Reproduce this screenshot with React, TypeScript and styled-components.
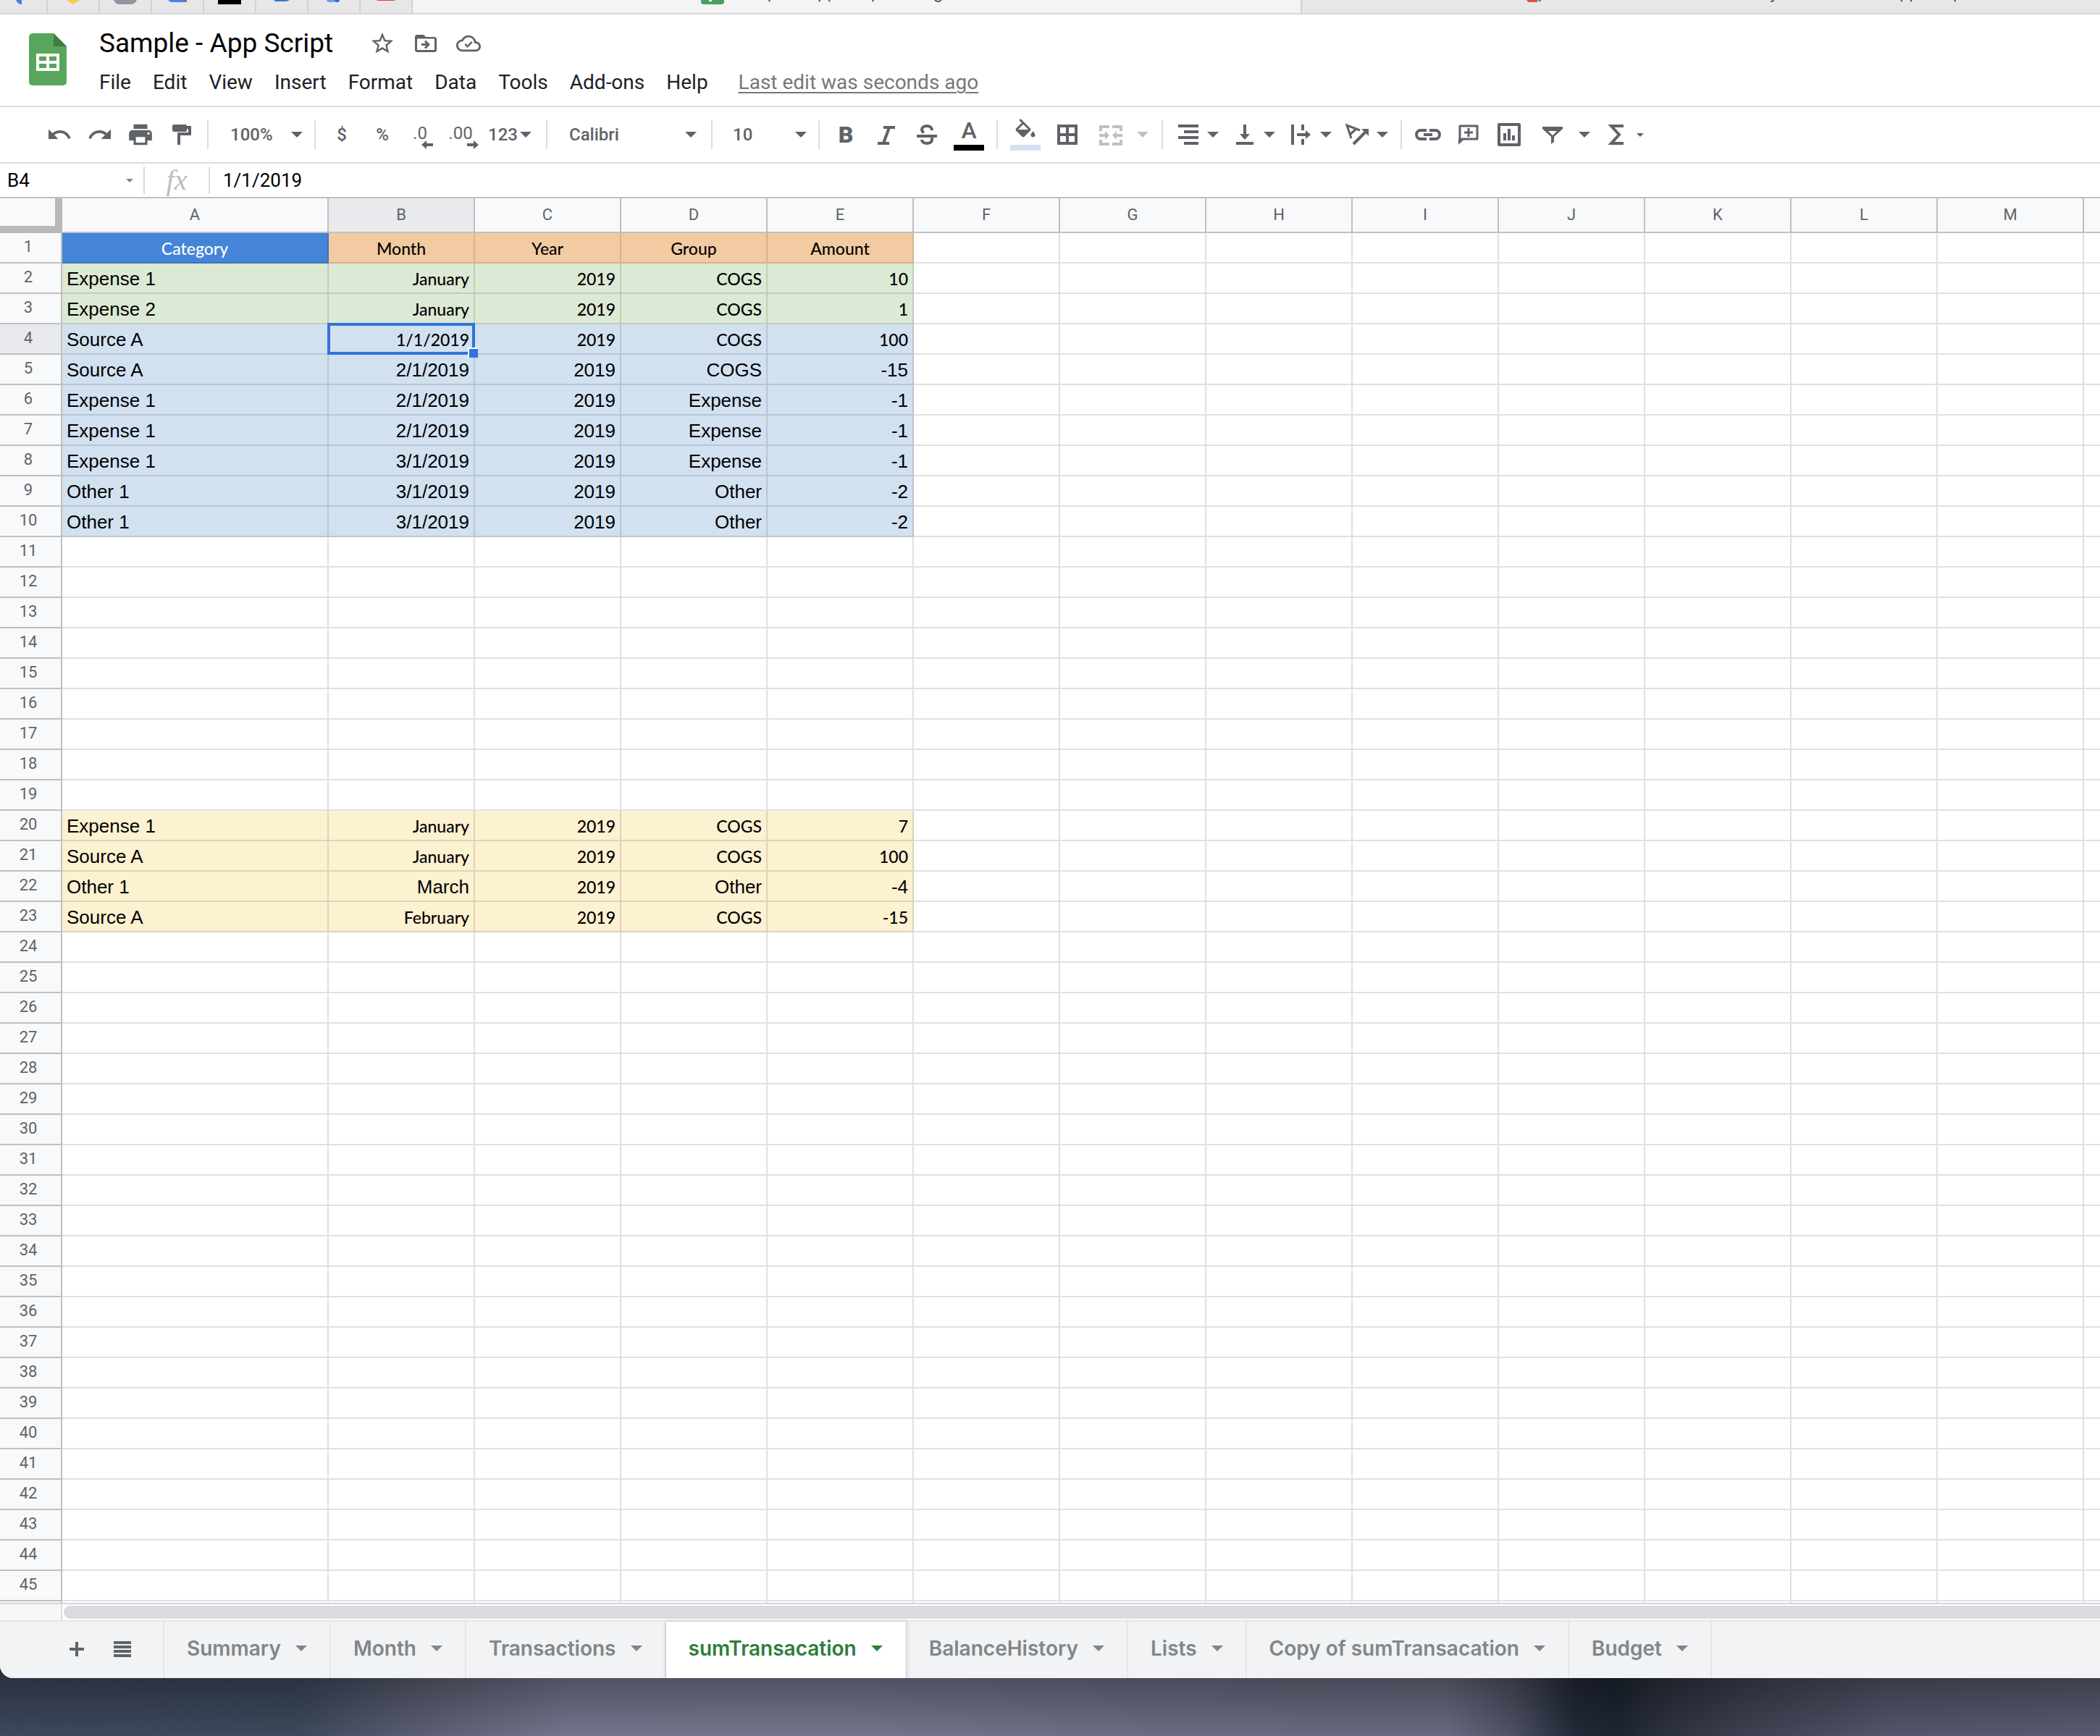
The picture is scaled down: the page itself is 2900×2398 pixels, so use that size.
import React from "react";
import styled, { createGlobalStyle } from "styled-components";

const INK = "#5f6368";
const LINE = "#dadce0";
const HEAD_LINE = "#c0c0c0";

const GlobalStyle = createGlobalStyle`
  *, *::before, *::after { box-sizing: border-box; }
  body {
    margin: 0;
    font-family: Roboto, "Liberation Sans", sans-serif;
    color: #202124;
  }
  button, input, select {
    font: inherit;
    color: inherit;
    border: 0;
    margin: 0;
    padding: 0;
    background: none;
    outline: 0;
  }
  button { cursor: pointer; }
`;

const Desktop = styled.div`
  display: flex;
  flex-direction: column;
  min-height: 100vh;
  padding-bottom: 80px;
  overflow: hidden;
  background:
    linear-gradient(to bottom, rgba(0, 0, 0, 0.38), rgba(0, 0, 0, 0)) bottom / 100% 100px no-repeat,
    linear-gradient(
      to right,
      #3e475c 0%,
      #3c485b 14%,
      #5b5e72 20%,
      #73758c 27%,
      #74768c 40%,
      #6a6c82 56%,
      #676a7f 69%,
      #4d5163 72%,
      #222938 75%,
      #1d2532 77%,
      #2b303d 79%,
      #3d4050 83%,
      #53556a 90%,
      #595b70 100%
    );
`;

const Window = styled.main`
  display: flex;
  flex-direction: column;
  background: #fff;
  border-bottom-left-radius: 18px;
  overflow: hidden;
`;

/* ---------- Browser tabs ---------- */

const BrowserTabs = styled.nav`
  display: flex;
  align-items: flex-end;
  height: 20px;
  overflow: hidden;
  border-bottom: 2px solid #d6d6d6;
`;

const PinnedTab = styled.button<{ $first?: boolean }>`
  display: flex;
  flex: none;
  align-items: center;
  justify-content: center;
  width: ${(p) => (p.$first ? 66 : 72)}px;
  height: 58px;
  padding-top: 2px;
  background: #e7e7e7;
  border-right: 2px solid #d2d2d2;
`;

const BrowserTab = styled.button<{ $active?: boolean }>`
  display: flex;
  flex: none;
  align-items: center;
  justify-content: center;
  gap: 14px;
  width: calc((100% - 444px) / 2);
  height: 58px;
  padding-top: 2px;
  white-space: nowrap;
  font: 22px Inter, sans-serif;
  color: #4a4a4a;
  background: ${(p) => (p.$active ? "#f4f4f4" : "#e7e7e7")};
  border-right: 2px solid #d2d2d2;
`;

/* ---------- Header ---------- */

const Header = styled.header`
  display: flex;
  gap: 45px;
  height: 126px;
  padding: 16px 40px 0;
`;

const LogoLink = styled.a`
  display: block;
  padding-top: 10px;
`;

const HeaderBody = styled.div`
  display: flex;
  flex-direction: column;
  gap: 10px;
`;

const TitleRow = styled.div`
  display: flex;
  align-items: center;
  gap: 24px;
`;

const TitleInput = styled.input`
  width: 349px;
  height: 48px;
  font-size: 37px;
  line-height: 48px;
  color: #000;
`;

const PlainButton = styled.button`
  display: flex;
  color: ${INK};
`;

const MenuRow = styled.div`
  display: flex;
  gap: 30px;
  font-size: 28px;
  line-height: 40px;
`;

const MenuButton = styled.button`
  white-space: nowrap;
`;

const EditLink = styled.a`
  margin-left: 12px;
  color: #777;
  white-space: nowrap;
  text-underline-offset: 4px;
  text-decoration-thickness: 2px;
`;

/* ---------- Toolbar ---------- */

const Toolbar = styled.div`
  display: flex;
  align-items: center;
  height: 80px;
  padding-left: 54px;
  border-top: 2px solid ${LINE};
  border-bottom: 2px solid ${LINE};
  font-size: 24px;
  font-weight: 500;
  color: ${INK};
`;

const Divider = styled.div`
  flex: none;
  width: 2px;
  height: 40px;
  margin: 0 8px;
  background: ${LINE};
`;

const ToolButton = styled.button<{ $width?: number; $faded?: boolean }>`
  display: flex;
  flex: none;
  align-items: center;
  justify-content: center;
  width: ${(p) => p.$width ?? 56}px;
  height: 52px;
  opacity: ${(p) => (p.$faded ? 0.4 : 1)};
`;

const SplitButton = styled(ToolButton)<{ $gap: number; $start: number }>`
  justify-content: flex-start;
  gap: ${(p) => p.$gap}px;
  padding-left: ${(p) => p.$start}px;
`;

const Decimal = styled.span`
  display: grid;
  padding: 8px 8px 0 0;
  font-size: 24px;
  font-weight: 400;
  line-height: 20px;

  svg {
    justify-self: end;
    margin-right: -8px;
  }
`;

const Swatch = styled.span<{ $color: string }>`
  display: grid;
  justify-items: center;
  width: 42px;
  height: 44px;
  font-size: 32px;
  line-height: 32px;
  border-bottom: 8px solid ${(p) => p.$color};
`;

const BoldMark = styled.span`
  font-size: 32px;
  font-weight: 900;
`;

const SelectBox = styled.label<{ $width: number; $start: number; $end: number }>`
  display: grid;
  flex: none;
  align-items: center;
  width: ${(p) => p.$width}px;
  padding: 0 ${(p) => p.$end}px 0 ${(p) => p.$start}px;

  select, svg { grid-area: 1 / 1; }
  select { width: 100%; height: 40px; appearance: none; }
  svg { justify-self: end; pointer-events: none; }
`;

/* ---------- Formula bar ---------- */

const FormulaBar = styled.div`
  display: flex;
  align-items: center;
  height: 48px;
  border-bottom: 2px solid ${HEAD_LINE};
  font-size: 26px;
  color: #000;
`;

const NameBox = styled.label`
  display: flex;
  align-items: center;
  width: 200px;
  height: 38px;
  padding: 0 14px 0 10px;
  color: #80868b;
  border-right: 2px solid ${LINE};

  input { flex: 1; min-width: 0; color: #000; }
`;

const FormulaField = styled.label`
  display: flex;
  flex: 1;
  align-items: center;

  input {
    flex: 1;
    height: 36px;
    padding-left: 18px;
    border-left: 2px solid ${LINE};
  }
`;

const FxMark = styled.span`
  width: 88px;
  text-align: center;
  font: italic 40px/40px "Liberation Serif", serif;
  color: #bdbdbd;
`;

/* ---------- Grid ---------- */

const Sheet = styled.table`
  width: 100%;
  table-layout: fixed;
  border-spacing: 0;
  border-bottom: 2px solid #d5d5d5;

  tr > :last-child { border-right: 0; }
`;

const Corner = styled.td`
  height: 48px;
  padding: 0;
  background: #f8f9fa;
  border-right: 10px solid #b9b9b9;
  border-bottom: 10px solid #b9b9b9;
`;

const ColumnHead = styled.th<{ $selected?: boolean }>`
  height: 48px;
  padding: 0 0 2px;
  font-size: 22px;
  font-weight: 400;
  color: ${INK};
  background: ${(p) => (p.$selected ? "#e8eaed" : "#f8f9fa")};
  border-right: 2px solid ${HEAD_LINE};
  border-bottom: 2px solid ${HEAD_LINE};
`;

const RowHead = styled.th<{ $selected?: boolean }>`
  height: 42px;
  padding: 0 6px 2px 0;
  font-size: 22px;
  font-weight: 400;
  line-height: 36px;
  color: ${INK};
  background: ${(p) => (p.$selected ? "#e8eaed" : "#f8f9fa")};
  border-right: 2px solid ${HEAD_LINE};
  border-bottom: 2px solid ${HEAD_LINE};
`;

type Face = "arial" | "calibri";

const Cell = styled.td<{ $fill?: string; $align?: string; $face?: Face; $light?: boolean }>`
  position: relative;
  height: 42px;
  padding: 2px 6px 0;
  font-family: ${(p) => (p.$face === "calibri" ? 'Lato, "Liberation Sans"' : '"Liberation Sans", Arial')}, sans-serif;
  font-size: ${(p) => (p.$face === "calibri" ? 23 : 26)}px;
  font-weight: ${(p) => (p.$face === "calibri" ? 500 : 400)};
  line-height: 38px;
  text-align: ${(p) => p.$align ?? "left"};
  white-space: nowrap;
  color: ${(p) => (p.$light ? "#fff" : "#000")};
  background: ${(p) => p.$fill ?? "#fff"};
  border-right: 2px solid rgba(0, 0, 0, 0.12);
  border-bottom: 2px solid rgba(0, 0, 0, 0.12);
`;

const Sliver = styled.td<{ $head?: boolean }>`
  height: 2px;
  padding: 0;
  background: ${(p) => (p.$head ? "#f8f9fa" : "#fff")};
  border-right: 2px solid ${(p) => (p.$head ? HEAD_LINE : "#e0e0e0")};
`;

const Selection = styled.span`
  position: absolute;
  z-index: 1;
  inset: -2px;
  border: 4px solid #3272dd;

  &::after {
    content: "";
    position: absolute;
    right: -8px;
    bottom: -8px;
    width: 14px;
    height: 14px;
    background: #3272dd;
    border-top: 2px solid #fff;
    border-left: 2px solid #fff;
  }
`;

const ScrollRow = styled.div`
  display: flex;
  height: 22px;
`;

const ScrollStub = styled.div`
  flex: none;
  width: 86px;
  background: #f8f8f8;
  border-right: 2px solid ${LINE};
`;

const ScrollThumb = styled.div`
  flex: 1;
  margin: 2px 0 2px 2px;
  background: #dadbdf;
  border-radius: 9px 0 0 9px;
`;

/* ---------- Sheet tabs ---------- */

const SheetBar = styled.nav`
  display: flex;
  height: 80px;
  background: #f1f3f4;
  border-top: 2px solid #e4e6e8;
`;

const SheetActions = styled.div`
  display: flex;
  align-items: center;
  gap: 38px;
  width: 227px;
  padding: 0 0 2px 94px;
  border-right: 2px solid #e4e6e8;
`;

const SheetTab = styled.button<{ $active?: boolean }>`
  display: flex;
  align-items: center;
  gap: 20px;
  padding: 0 31px 4px;
  font-family: Inter, Roboto, sans-serif;
  font-size: 28px;
  font-weight: 600;
  white-space: nowrap;
  color: ${(p) => (p.$active ? "#2e7d3a" : "#80868b")};
  background: ${(p) => (p.$active ? "#fff" : "transparent")};
  border-right: 2px solid #e4e6e8;
  box-shadow: ${(p) => (p.$active ? "0 0 6px rgba(60, 64, 67, 0.25)" : "none")};
`;

/* ---------- Icons ---------- */

type IconProps = { size?: number; children: React.ReactNode };

const Glyph = ({ size = 36, children }: IconProps) => (
  <svg width={size} height={size} viewBox="0 0 24 24" fill="currentColor" aria-hidden="true">
    {children}
  </svg>
);

const Line = ({ size = 36, children }: IconProps) => (
  <svg width={size} height={size} viewBox="0 0 36 36" fill="none" stroke="currentColor" strokeWidth="4" aria-hidden="true">
    {children}
  </svg>
);

const Caret = ({ small }: { small?: boolean }) => (
  <svg width={small ? 10 : 16} height={small ? 5 : 8} viewBox="0 0 16 8" fill="currentColor" aria-hidden="true">
    <path d="M0 0h16L8 8z" />
  </svg>
);

const Logo = () => (
  <svg width="52" height="72" viewBox="0 0 52 72" aria-hidden="true">
    <path d="M5 0h29l18 18v49a5 5 0 0 1-5 5H5a5 5 0 0 1-5-5V5a5 5 0 0 1 5-5z" fill="#57a65b" />
    <path d="M34 0l18 18H34z" fill="#3c7f41" />
    <path d="M10 28h32v24H10zM14 32v6h10v-6zM28 32v6h10v-6zM14 42v6h10v-6zM28 42v6h10v-6z" fill="#fff" fillRule="evenodd" />
  </svg>
);

const StarIcon = () => (
  <Glyph>
    <path d="M22 9.24l-7.19-.62L12 2 9.19 8.63 2 9.24l5.46 4.73L5.82 21 12 17.27 18.18 21l-1.63-7.03L22 9.24zM12 15.4l-3.76 2.27 1-4.28-3.32-2.88 4.38-.38L12 6.1l1.71 4.04 4.38.38-3.32 2.88 1 4.28L12 15.4z" />
  </Glyph>
);

const MoveIcon = () => (
  <Glyph>
    <path d="M20 6h-8l-2-2H4c-1.1 0-2 .9-2 2v12c0 1.1.9 2 2 2h16c1.1 0 2-.9 2-2V8c0-1.1-.9-2-2-2zm0 12H4V7.6h16V18z" />
    <path d="M12.16 12H8v2h4.16l-1.59 1.59L11.99 17 16 13.01 11.99 9l-1.41 1.41L12.16 12z" />
  </Glyph>
);

const CloudIcon = () => (
  <Glyph size={34}>
    <path d="M19.35 10.04C18.67 6.59 15.64 4 12 4 9.11 4 6.6 5.64 5.35 8.04 2.34 8.36 0 10.91 0 14c0 3.31 2.69 6 6 6h13c2.76 0 5-2.24 5-5 0-2.64-2.05-4.78-4.65-4.96zM19 18H6c-2.21 0-4-1.79-4-4 0-2.05 1.53-3.76 3.56-3.97l1.07-.11.5-.95C8.08 7.14 9.94 6 12 6c2.62 0 4.88 1.86 5.39 4.43l.3 1.5 1.53.11c1.56.1 2.78 1.41 2.78 2.96 0 1.65-1.35 3-3 3z" />
    <path d="M11 16.2l-3-3 1.3-1.2 1.7 1.7 3.8-3.8 1.2 1.3z" />
  </Glyph>
);

const UndoIcon = () => (
  <Glyph>
    <path d="M12.5 8c-2.65 0-5.05.99-6.9 2.6L2 7v9h9l-3.62-3.62c1.39-1.16 3.16-1.88 5.12-1.88 3.54 0 6.55 2.31 7.6 5.5l2.37-.78C21.08 11.03 17.15 8 12.5 8z" />
  </Glyph>
);

const RedoIcon = () => (
  <Glyph>
    <path d="M18.4 10.6C16.55 8.99 14.15 8 11.5 8c-4.65 0-8.58 3.03-9.96 7.22L3.9 16c1.05-3.19 4.05-5.5 7.6-5.5 1.95 0 3.73.72 5.12 1.88L13 16h9V7l-3.6 3.6z" />
  </Glyph>
);

const PrintIcon = () => (
  <Glyph size={38}>
    <path d="M19 8H5c-1.66 0-3 1.34-3 3v6h4v4h12v-4h4v-6c0-1.66-1.34-3-3-3zm-3 11H8v-5h8v5zm3-7c-.55 0-1-.45-1-1s.45-1 1-1 1 .45 1 1-.45 1-1 1zm-1-9H6v4h12V3z" />
  </Glyph>
);

const RollerIcon = () => (
  <Line>
    <rect x="8" y="6" width="16" height="6" fill="currentColor" strokeLinejoin="round" />
    <path d="M24 8h6v9H15v15" />
  </Line>
);

const ArrowMark = ({ right }: { right?: boolean }) => (
  <svg width="16" height="12" viewBox="0 0 16 12" fill="currentColor" aria-hidden="true">
    {right ? <path d="M16 6L9 0v4H0v4h9v4z" /> : <path d="M0 6l7-6v4h9v4H7v4z" />}
  </svg>
);

const ItalicIcon = () => (
  <Line>
    <path d="M14 8h16M6 30h16M22 8l-8 22" />
  </Line>
);

const StrikeIcon = () => (
  <Line>
    <path d="M4 20h28M25 12c0-4-3-6-7-6s-7 2-7 5c0 2 1 3 3 4M11 25c0 3 3 5 7 5s7-2 7-5c0-1 0-2-1-3" />
  </Line>
);

const FillIcon = () => (
  <Glyph>
    <path d="M16.56 8.94L7.62 0 6.21 1.41l2.38 2.38-5.15 5.15c-.59.59-.59 1.54 0 2.12l5.5 5.5c.29.29.68.44 1.06.44s.77-.15 1.06-.44l5.5-5.5c.59-.58.59-1.53 0-2.12zM5.21 10L10 5.21 14.79 10H5.21zM19 11.5s-2 2.17-2 3.5c0 1.1.9 2 2 2s2-.9 2-2c0-1.33-2-3.5-2-3.5z" />
  </Glyph>
);

const BordersIcon = () => (
  <Line>
    <path d="M6 6h24v24H6zM18 6v24M6 18h24" />
  </Line>
);

const MergeIcon = () => (
  <Line>
    <path d="M4 13V7h12M32 13V7H20M4 25v6h12M32 25v6H20M2 19h8M34 19h-8" />
    <path d="M10 13l6 6-6 6zM26 13l-6 6 6 6z" fill="currentColor" stroke="none" />
  </Line>
);

const AlignIcon = () => (
  <Line>
    <path d="M4 6h28M12 14h20M4 22h28M12 30h20" />
  </Line>
);

const BottomIcon = () => (
  <Line>
    <path d="M6 30h24M18 4v14" />
    <path d="M11 17h14l-7 8z" fill="currentColor" stroke="none" />
  </Line>
);

const WrapIcon = () => (
  <Line>
    <path d="M6 4v28M20 4v8M20 24v8M12 18h14" />
    <path d="M24 12l7 6-7 6z" fill="currentColor" stroke="none" />
  </Line>
);

const RotateIcon = () => (
  <Line>
    <path d="M21 12L3 5l6 18M8 17l8-7" strokeWidth="3" />
    <path d="M12 31l18-18" />
    <path d="M23 10h10v10z" fill="currentColor" stroke="none" />
  </Line>
);

const LinkIcon = () => (
  <Line>
    <path d="M16 12H8a6 6 0 0 0 0 12h8M20 12h8a6 6 0 0 1 0 12h-8M12 18h12" />
  </Line>
);

const CommentIcon = () => (
  <Line>
    <path d="M6 28V6h24v18H9l-3 4" strokeWidth="3" strokeLinejoin="round" />
    <path d="M4 24h8l-8 8z" fill="currentColor" stroke="none" />
    <path d="M18 9v12M12 15h12" strokeWidth="3" />
  </Line>
);

const ChartIcon = () => (
  <Line>
    <path d="M4 4h28v28H4z" strokeLinejoin="round" />
    <path d="M12 16v10M18 10v16M24 19v7" />
  </Line>
);

const FilterIcon = () => (
  <Line>
    <path d="M4 7h28v3L20 21v7l-4 3V21L4 10zM12 13l6 6 6-6z" fill="currentColor" fillRule="evenodd" stroke="none" />
  </Line>
);

const SumIcon = () => (
  <Line>
    <path d="M28 6H11l11 12-11 12h17" />
  </Line>
);

const PlusIcon = () => (
  <svg width="24" height="24" viewBox="0 0 24 24" fill="none" stroke="currentColor" strokeWidth="4" aria-hidden="true">
    <path d="M12 2v20M2 12h20" />
  </svg>
);

const ListIcon = () => (
  <svg width="26" height="26" viewBox="0 0 26 26" fill="none" stroke="currentColor" strokeWidth="4" aria-hidden="true">
    <path d="M1 4h24M1 10h24M1 16h24M1 22h24" />
  </svg>
);

const Favicon = ({ children }: { children: React.ReactNode }) => (
  <svg width="32" height="32" viewBox="0 0 32 32" aria-hidden="true">
    {children}
  </svg>
);

/* ---------- Data ---------- */

const pinned: { name: string; art: React.ReactNode }[] = [
  { name: "Facebook", art: <path d="M14 32a8 8 0 0 1-8-8V0h8z" fill="#3f7df0" /> },
  { name: "Notes", art: <path d="M16 32L2 23V6h28v17z" fill="#fbc84a" /> },
  { name: "Mail", art: <rect width="32" height="32" rx="8" fill="#9495a3" /> },
  {
    name: "Calendar",
    art: (
      <>
        <rect x="3" width="26" height="29" rx="5" fill="#4583ee" />
        <path d="M25 29l4-8v8z" fill="#d9504a" />
      </>
    ),
  },
  { name: "Terminal", art: <rect width="32" height="32" fill="#000" /> },
  { name: "Docs", art: <path d="M6 0h24v20q-2 8-9 8H6z" fill="#2f78d8" /> },
  {
    name: "Analytics",
    art: (
      <>
        <rect x="6" y="6" width="13" height="23" rx="4" fill="#6b9df5" />
        <rect x="17" width="7" height="29" rx="3" fill="#2f66de" />
      </>
    ),
  },
  { name: "Video", art: <rect y="5" width="32" height="22" rx="6" fill="#e2402c" /> },
];

const menus = ["File", "Edit", "View", "Insert", "Format", "Data", "Tools", "Add-ons", "Help"];

const columns = ["A", "B", "C", "D", "E", "F", "G", "H", "I", "J", "K", "L", "M", ""];

const ROWS = 45;

const BLUE = "#4585d9";
const ORANGE = "#f2cba2";
const GREEN = "#dce9d5";
const SKY = "#d2e1f0";
const CREAM = "#fcf1d0";

type Row = { fill: string; values: string[]; faces: string };

/* faces: one letter per column, c for the Calibri face and a for Arial */
const rows: Record<number, Row> = {
  1: { fill: ORANGE, values: ["Category", "Month", "Year", "Group", "Amount"], faces: "ccccc" },
  2: { fill: GREEN, values: ["Expense 1", "January", "2019", "COGS", "10"], faces: "acccc" },
  3: { fill: GREEN, values: ["Expense 2", "January", "2019", "COGS", "1"], faces: "acccc" },
  4: { fill: SKY, values: ["Source A", "1/1/2019", "2019", "COGS", "100"], faces: "acccc" },
  5: { fill: SKY, values: ["Source A", "2/1/2019", "2019", "COGS", "-15"], faces: "aaaaa" },
  6: { fill: SKY, values: ["Expense 1", "2/1/2019", "2019", "Expense", "-1"], faces: "aaaaa" },
  7: { fill: SKY, values: ["Expense 1", "2/1/2019", "2019", "Expense", "-1"], faces: "aaaaa" },
  8: { fill: SKY, values: ["Expense 1", "3/1/2019", "2019", "Expense", "-1"], faces: "aaaaa" },
  9: { fill: SKY, values: ["Other 1", "3/1/2019", "2019", "Other", "-2"], faces: "aaaaa" },
  10: { fill: SKY, values: ["Other 1", "3/1/2019", "2019", "Other", "-2"], faces: "aaaaa" },
  20: { fill: CREAM, values: ["Expense 1", "January", "2019", "COGS", "7"], faces: "acccc" },
  21: { fill: CREAM, values: ["Source A", "January", "2019", "COGS", "100"], faces: "acccc" },
  22: { fill: CREAM, values: ["Other 1", "March", "2019", "Other", "-4"], faces: "aacaa" },
  23: { fill: CREAM, values: ["Source A", "February", "2019", "COGS", "-15"], faces: "acccc" },
};

const sheets = [
  "Summary",
  "Month",
  "Transactions",
  "sumTransacation",
  "BalanceHistory",
  "Lists",
  "Copy of sumTransacation",
  "Budget",
];

/* ---------- Parts ---------- */

const SheetRow = ({ number }: { number: number }) => {
  const row = rows[number];
  return (
    <tr>
      <RowHead scope="row" $selected={number === 4}>
        {number}
      </RowHead>
      {columns.map((_, i) => {
        const text = row?.values[i];
        if (text === undefined) return <Cell key={i} />;
        const heading = number === 1;
        return (
          <Cell
            key={i}
            $fill={heading && i === 0 ? BLUE : row.fill}
            $light={heading && i === 0}
            $align={heading ? "center" : i === 0 ? "left" : "right"}
            $face={row.faces[i] === "c" ? "calibri" : "arial"}
          >
            {text}
            {number === 4 && i === 1 && <Selection />}
          </Cell>
        );
      })}
    </tr>
  );
};

const Choice = (p: { name: string; value: string; width: number; start: number; end: number }) => (
  <SelectBox $width={p.width} $start={p.start} $end={p.end}>
    <select aria-label={p.name} defaultValue={p.value}>
      <option>{p.value}</option>
    </select>
    <Caret />
  </SelectBox>
);

const Split = (p: { name: string; icon: React.ReactNode; wide?: boolean; faded?: boolean }) => (
  <SplitButton
    aria-label={p.name}
    $width={p.wide ? 94 : 78}
    $start={p.wide ? 14 : 9}
    $gap={p.wide ? 18 : 8}
    $faded={p.faded}
  >
    {p.icon}
    <Caret />
  </SplitButton>
);

const Tool = (p: { name: string; width?: number; children: React.ReactNode }) => (
  <ToolButton aria-label={p.name} $width={p.width}>
    {p.children}
  </ToolButton>
);

export default function App() {
  return (
    <>
      <GlobalStyle />
      <Desktop>
        <Window>
          <BrowserTabs aria-label="Browser tabs">
            {pinned.map((tab, i) => (
              <PinnedTab key={tab.name} aria-label={tab.name} $first={i === 0}>
                <Favicon>{tab.art}</Favicon>
              </PinnedTab>
            ))}
            <BrowserTab $active>
              <Favicon>
                <rect width="32" height="32" rx="4" fill="#4b9e5f" />
                <path d="M11 8v20h4V8z" fill="#fff" />
              </Favicon>
              Sample - App Script - Google Sheets
            </BrowserTab>
            <BrowserTab>
              <Favicon>
                <path d="M4 8v16q0 5 5 5h10V8z" fill="#dd4f40" />
                <path d="M20 8h4v20h-4z" fill="#5d83d6" />
              </Favicon>
              Total the transactions sum by each Month - App Script
            </BrowserTab>
          </BrowserTabs>

          <Header>
            <LogoLink href="#" aria-label="Sheets home">
              <Logo />
            </LogoLink>
            <HeaderBody>
              <TitleRow>
                <TitleInput aria-label="Document title" defaultValue="Sample - App Script" />
                <PlainButton aria-label="Star"><StarIcon /></PlainButton>
                <PlainButton aria-label="Move"><MoveIcon /></PlainButton>
                <PlainButton aria-label="Document status"><CloudIcon /></PlainButton>
              </TitleRow>
              <MenuRow>
                {menus.map((m) => (
                  <MenuButton key={m}>{m}</MenuButton>
                ))}
                <EditLink href="#">Last edit was seconds ago</EditLink>
              </MenuRow>
            </HeaderBody>
          </Header>

          <Toolbar role="toolbar" aria-label="Formatting">
            <Tool name="Undo"><UndoIcon /></Tool>
            <Tool name="Redo"><RedoIcon /></Tool>
            <Tool name="Print"><PrintIcon /></Tool>
            <Tool name="Paint format"><RollerIcon /></Tool>
            <Divider />
            <Choice name="Zoom" value="100%" width={130} start={22} end={8} />
            <Divider />
            <Tool name="Format as currency">$</Tool>
            <Tool name="Format as percent">%</Tool>
            <Tool name="Decrease decimal places">
              <Decimal>.0<ArrowMark /></Decimal>
            </Tool>
            <Tool name="Increase decimal places">
              <Decimal>.00<ArrowMark right /></Decimal>
            </Tool>
            <Choice name="More formats" value="123" width={78} start={6} end={12} />
            <Divider />
            <Choice name="Font" value="Calibri" width={210} start={22} end={12} />
            <Divider />
            <Choice name="Font size" value="10" width={130} start={20} end={8} />
            <Divider />
            <Tool name="Bold"><BoldMark>B</BoldMark></Tool>
            <Tool name="Italic"><ItalicIcon /></Tool>
            <Tool name="Strikethrough"><StrikeIcon /></Tool>
            <Tool name="Text color" width={60}><Swatch $color="#000">A</Swatch></Tool>
            <Divider />
            <Tool name="Fill color" width={60}><Swatch $color="#d2e0f0"><FillIcon /></Swatch></Tool>
            <Tool name="Borders"><BordersIcon /></Tool>
            <Split name="Merge cells" icon={<MergeIcon />} wide faded />
            <Divider />
            <Split name="Horizontal align" icon={<AlignIcon />} />
            <Split name="Vertical align" icon={<BottomIcon />} />
            <Split name="Text wrapping" icon={<WrapIcon />} />
            <Split name="Text rotation" icon={<RotateIcon />} />
            <Divider />
            <Tool name="Insert link"><LinkIcon /></Tool>
            <Tool name="Insert comment"><CommentIcon /></Tool>
            <Tool name="Insert chart"><ChartIcon /></Tool>
            <Split name="Filter" icon={<FilterIcon />} wide />
            <SplitButton aria-label="Functions" $width={78} $start={8} $gap={10}>
              <SumIcon />
              <Caret small />
            </SplitButton>
          </Toolbar>

          <FormulaBar>
            <NameBox>
              <input aria-label="Name box" defaultValue="B4" />
              <Caret small />
            </NameBox>
            <FormulaField>
              <FxMark>fx</FxMark>
              <input defaultValue="1/1/2019" />
            </FormulaField>
          </FormulaBar>

          <Sheet>
            <colgroup>
              {[86, 368, ...Array(12).fill(202)].map((w, i) => (
                <col key={i} width={w} />
              ))}
              <col />
            </colgroup>
            <thead>
              <tr>
                <Corner />
                {columns.map((c) => (
                  <ColumnHead key={c} scope="col" $selected={c === "B"}>
                    {c}
                  </ColumnHead>
                ))}
              </tr>
            </thead>
            <tbody>
              {Array.from({ length: ROWS }, (_, i) => (
                <SheetRow key={i} number={i + 1} />
              ))}
              <tr>
                <Sliver $head />
                {columns.map((c) => (
                  <Sliver key={c} />
                ))}
              </tr>
            </tbody>
          </Sheet>

          <ScrollRow>
            <ScrollStub />
            <ScrollThumb />
          </ScrollRow>

          <SheetBar aria-label="Sheets">
            <SheetActions>
              <PlainButton aria-label="Add sheet"><PlusIcon /></PlainButton>
              <PlainButton aria-label="All sheets"><ListIcon /></PlainButton>
            </SheetActions>
            {sheets.map((s) => (
              <SheetTab key={s} $active={s === "sumTransacation"}>
                {s}
                <Caret />
              </SheetTab>
            ))}
          </SheetBar>
        </Window>
      </Desktop>
    </>
  );
}
